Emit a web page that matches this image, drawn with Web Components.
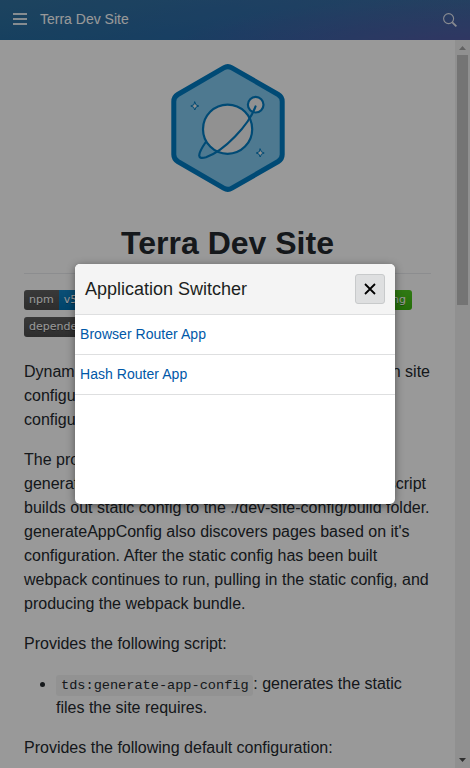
<!DOCTYPE html>
<html lang="en">
<head>
<meta charset="utf-8">
<title>Terra Dev Site</title>
<style>
html,body{margin:0;height:100%;overflow:hidden}
body{font-family:"Liberation Sans",Arial,sans-serif;background:#fff}
</style>
</head>
<body>
<dev-site></dev-site>
<script>
function define(name, html) {
  const template = document.createElement('template');
  template.innerHTML = html;
  customElements.define(name, class extends HTMLElement {
    constructor() {
      super();
      this.attachShadow({ mode: 'open' }).append(template.content.cloneNode(true));
    }
  });
}

define('site-header', `
<style>
:host{display:flex;align-items:center;box-sizing:border-box;height:40px;padding:0 13px 0 13px;color:#fff;
background:radial-gradient(ellipse 300px 50px at 100% 120%,rgba(92,84,164,.75),rgba(92,84,164,0)),linear-gradient(172deg,rgba(72,124,158,.5),rgba(72,124,158,0) 80%),linear-gradient(90deg,#1a669f,#2866a6 50%,#3c6aa2)}
.title{font-size:14px;line-height:20px;margin-left:13px;flex:1;position:relative;top:-1px}
svg{display:block}
.menu{margin-top:-2px}
</style>
<svg class="menu" width="14" height="12" fill="#fff" fill-opacity=".85"><path d="M0 0h14v2H0zM0 5h14v2H0zM0 10h14v2H0z"/></svg>
<span class="title"><slot></slot></span>
<svg width="14" height="14" fill="none" stroke="#fff" stroke-opacity=".85"><circle cx="5.6" cy="5.6" r="5" stroke-width="1.1"/><path d="M9.3 9.3l4.1 4.1" stroke-width="1.8"/></svg>`);

define('planet-logo', `
<style>:host{display:block;width:114px;height:128px}svg{display:block}</style>
<svg width="114" height="128" viewBox="171 64 114 128" fill="none" stroke="#007cc3" stroke-linecap="round" stroke-linejoin="round">
<path fill="#82caf0" stroke-width="5" d="M223.7 67.8Q227.8 65.4 231.9 67.8L278.2 94.5Q282.2 96.9 282.2 101.5V154.5Q282.2 159.1 278.2 161.5L231.9 188.2Q227.8 190.6 223.7 188.2L177.8 161.5Q173.8 159.1 173.8 154.5V101.5Q173.8 96.9 177.8 94.5Z"/>
<circle cx="227.6" cy="129.2" r="24.6" fill="#f2f2f2" stroke-width="2.2"/>
<circle cx="255.7" cy="104.7" r="7.8" fill="#f2f2f2" stroke-width="2.2"/>
<path stroke-width="2.2" d="M255.5 106.5C249 125 224 151 206 157.2C197.5 159.8 196.5 155.5 205.8 142"/>
<path fill="#f2f2f2" stroke-width="1" d="M194.8 102L196 104.8 198.8 106 196 107.2 194.8 110 193.6 107.2 190.8 106 193.6 104.8ZM260.2 149L261.4 151.8 264.2 153 261.4 154.2 260.2 157 259 154.2 256.2 153 259 151.8Z"/>
</svg>`);

define('status-badge', `
<style>
:host{display:inline-flex;height:20px;border-radius:3px;overflow:hidden;font:11px/20px "DejaVu Sans",Verdana,sans-serif;color:#fff;text-shadow:0 1px 0 rgba(1,1,1,.3);white-space:nowrap;flex:none}
.label{background:linear-gradient(rgba(187,187,187,.1),rgba(0,0,0,.1)),#555;padding:0 5px 0 5px}
.value{background:linear-gradient(rgba(187,187,187,.1),rgba(0,0,0,.1)),var(--tone);padding:0 6px 0 5px}
</style>
<span class="label"><slot name="label"></slot></span><span class="value"><slot></slot></span>`);

define('text-line', `
<style>:host{display:flex;justify-content:space-between;white-space:nowrap;width:var(--line,100%)}</style><slot></slot>`);

define('scroll-track', `
<style>
:host{display:flex;flex-direction:column;align-items:center;width:15px;background:#f1f1f1;flex:none}
.thumb{width:11px;height:250px;background:#c1c1c1}
.gap{flex:1}
svg{display:block;flex:none}
</style>
<svg width="15" height="15"><path d="M4 10h7L7.5 6z" fill="#a3a3a3"/></svg>
<div class="thumb"></div><div class="gap"></div>
<svg width="15" height="15"><path d="M4 5h7L7.5 9z" fill="#505050"/></svg>`);

define('readme-page', `
<style>
:host{display:block;box-sizing:border-box;flex:1;min-width:0;padding:24px 24px 0;overflow:hidden;color:#24292e;font-size:16px;line-height:24px}
planet-logo{margin:0 auto}
h1{margin:31px 0 16px;padding-bottom:10px;border-bottom:1px solid #eaecef;font-size:32px;line-height:40px;text-align:center}
p,ul{margin:0 0 16px}
.badges{display:flex;flex-direction:column;gap:7px;margin-bottom:23px}
.row{display:flex;justify-content:space-between;width:388px}
ul{padding-left:32px}
code{font:13.6px "Liberation Mono",monospace;padding:.2em 4.7px .2em 5px;background:rgba(27,31,35,.05);border-radius:3px}
</style>
<planet-logo></planet-logo>
<h1>Terra Dev Site</h1>
<div class="badges">
<div class="row"><status-badge style="--tone:#007ec6"><span slot="label">npm</span>v5.1.0</status-badge><status-badge style="--tone:#44cc11"><span slot="label">build</span>passing</status-badge></div>
<div class="row"><status-badge style="--tone:#44cc11"><span slot="label">dependencies</span>up to date</status-badge></div>
</div>
<p><text-line style="--line:406px"><span>Dynamically generates</span><span>documentation site</span></text-line>
<text-line>configuration and webpack</text-line><text-line>configuration.</text-line></p>
<p><text-line>The provided webpack config runs the</text-line>
<text-line style="--line:402px"><span>generateAppConfig</span><span>script. The script</span></text-line>
<text-line>builds out static config to the ./dev-site-config/build folder.</text-line>
<text-line>generateAppConfig also discovers pages based on it's</text-line>
<text-line>configuration. After the static config has been built</text-line>
<text-line>webpack continues to run, pulling in the static config, and</text-line>
<text-line>producing the webpack bundle.</text-line></p>
<p>Provides the following script:</p>
<ul><li><code>tds:generate-app-config</code>: generates the static<br>files the site requires.</li></ul>
<p>Provides the following default configuration:</p>`);

define('app-link', `
<style>:host{display:block;height:39px;border-bottom:1px solid #dedfe0;padding-left:5px;font-size:14px;letter-spacing:.04px;line-height:39px;color:#0058a8}</style><slot></slot>`);

define('app-dialog', `
<style>
:host{display:block;width:320px;height:240px;border-radius:5px;overflow:hidden;background:#fff;box-shadow:0 2px 8px rgba(0,0,0,.45)}
header{display:flex;align-items:center;justify-content:space-between;height:50px;padding:0 10px;background:#f4f4f4;border-bottom:1px solid #dedfe0;font-size:18px;color:#1c1f21}
button{display:grid;place-items:center;width:30px;height:30px;padding:0;border:1px solid #c8cacb;border-radius:3px;background:#dedfe0}
</style>
<header><slot name="title"></slot><button aria-label="Close"><svg width="12" height="12" fill="none" stroke="#000" stroke-width="1.8"><path d="M1 1l10 10M11 1L1 11"/></svg></button></header>
<slot></slot>`);

define('dev-site', `
<style>
:host{display:flex;flex-direction:column;height:100vh;width:100%}
.main{display:flex;flex:1;min-height:0}
.overlay{position:absolute;inset:0;display:grid;place-items:center;background:rgba(0,0,0,.4)}
</style>
<site-header>Terra Dev Site</site-header>
<div class="main"><readme-page></readme-page><scroll-track></scroll-track></div>
<div class="overlay"><app-dialog><span slot="title">Application Switcher</span><app-link>Browser Router App</app-link><app-link>Hash Router App</app-link></app-dialog></div>`);
</script>
</body>
</html>
